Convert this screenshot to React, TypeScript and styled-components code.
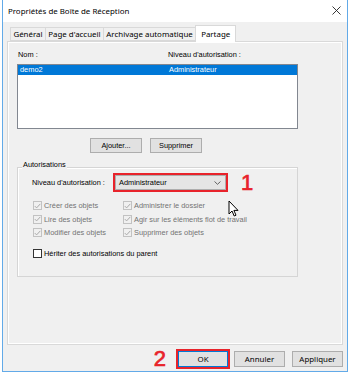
import styled, { createGlobalStyle } from "styled-components";
import { ReactElement } from "react";

const GlobalStyle = createGlobalStyle`
  html, body {
    margin: 0;
    padding: 0;
    background: #ffffff;
    width: 350px;
    height: 374px;
    overflow: hidden;
  }
  * {
    box-sizing: border-box;
  }
`;

const ui = `"Noto Sans", "Liberation Sans", sans-serif`;
const classic = `"Liberation Sans", Arial, sans-serif`;
const red = "#e8232b";

const Window = styled.div`
  position: relative;
  margin-left: 2px;
  width: 346px;
  height: 372px;
  display: flex;
  flex-direction: column;
  border: 1px solid #62aae8;
  border-top: none;
`;

const TitleBar = styled.div`
  height: 22px;
  flex: none;
  display: flex;
  align-items: center;
  justify-content: space-between;
  padding: 0 6px 1px 5px;
  background: #ffffff;
  font-family: ${ui};
  font-size: 7.9px;
  color: #000;
`;

const Body = styled.div`
  flex: 1;
  display: flex;
  flex-direction: column;
  background: #f0f0f0;
  padding: 4px 4px 0 4px;
`;

const TabStrip = styled.div`
  display: flex;
  align-items: flex-end;
  height: 15px;
  padding-left: 4px;
  position: relative;
  z-index: 1;
`;

const Tab = styled.div<{ $active?: boolean }>`
  height: ${(p) => (p.$active ? "17px" : "14px")};
  margin-bottom: ${(p) => (p.$active ? "-1px" : "0")};
  padding: 0 ${(p) => (p.$active ? "5px" : "2.4px")};
  display: flex;
  align-items: center;
  font-family: ${ui};
  font-size: 7.9px;
  color: #000;
  background: ${(p) => (p.$active ? "#ffffff" : "#f0f0f0")};
  border: 1px solid #d9d9d9;
  border-bottom: ${(p) => (p.$active ? "none" : "1px solid #d9d9d9")};
  margin-left: -1px;
`;

const Panel = styled.div`
  height: 304px;
  flex: none;
  border: 1px solid #d9d9d9;
  box-shadow: inset 1px 1px 0 #ffffff, inset -1px -1px 0 #ffffff;
  background: #f0f0f0;
  padding: 8px 0 0 9px;
  font-family: ${classic};
  font-size: 7.4px;
  color: #000;
`;

const HeaderRow = styled.div`
  display: flex;
  height: 10px;
  line-height: 10px;
`;

const Column = styled.div<{ $w?: number }>`
  width: ${(p) => (p.$w ? `${p.$w}px` : "auto")};
  padding-left: 1px;
`;

const ListBox = styled.div`
  margin-top: 4px;
  width: 281px;
  height: 65px;
  background: #ffffff;
  border: 1px solid #828790;
`;

const ListRow = styled.div<{ $selected?: boolean }>`
  display: flex;
  height: 10px;
  line-height: 10px;
  background: ${(p) => (p.$selected ? "#0078d7" : "transparent")};
  color: ${(p) => (p.$selected ? "#ffffff" : "#000")};
  padding-left: 2px;
`;

const ListCell = styled.div<{ $w?: number }>`
  width: ${(p) => (p.$w ? `${p.$w}px` : "auto")};
`;

const ActionRow = styled.div`
  display: flex;
  gap: 8px;
  margin-top: 9px;
  padding-left: 73px;
`;

const Button = styled.button<{ $w?: number; $default?: boolean }>`
  width: ${(p) => p.$w ?? 52}px;
  height: 16px;
  padding: 0;
  margin: 0;
  background: #e1e1e1;
  border: 1px solid ${(p) => (p.$default ? "#0078d7" : "#adadad")};
  font-family: ${ui};
  font-size: 7.9px;
  color: #000;
  display: flex;
  align-items: center;
  justify-content: center;
`;

const SmallButton = styled(Button)`
  height: 15px;
  font-family: ${classic};
  font-size: 7.4px;
`;

const GroupBox = styled.div`
  margin-top: 14px;
  width: 281px;
  height: 110px;
  border: 1px solid #d5d5d5;
  box-shadow: inset 1px 1px 0 #ffffff;
  display: flex;
  flex-direction: column;
`;

const Legend = styled.div`
  margin: -8px 0 0 4px;
  padding: 0 1px;
  width: fit-content;
  height: 10px;
  line-height: 10px;
  background: #f0f0f0;
`;

const LevelRow = styled.div`
  display: flex;
  align-items: center;
  margin-top: 3px;
  padding-left: 14px;
  height: 19px;
`;

const LevelLabel = styled.div`
  width: 81px;
`;

const Highlight = styled.div`
  border: 2px solid ${red};
  display: flex;
`;

const Combo = styled.div`
  width: 111px;
  height: 15px;
  background: #e5e5e5;
  border: 1px solid #adadad;
  display: flex;
  align-items: center;
  justify-content: space-between;
  padding: 0 4px 0 3px;
`;

const Marker = styled.div`
  font-family: ${classic};
  font-weight: 400;
  font-size: 22px;
  line-height: 19px;
  color: ${red};
  -webkit-text-stroke: 0.7px ${red};
`;

const OneMarker = styled(Marker)`
  margin-left: 13px;
`;

const PermGrid = styled.div`
  display: grid;
  grid-template-columns: 90px 160px;
  grid-auto-rows: 13.5px;
  margin-top: 7px;
  padding-left: 15px;
`;

const CheckRow = styled.div<{ $disabled?: boolean }>`
  display: flex;
  align-items: center;
  gap: 2px;
  color: ${(p) => (p.$disabled ? "#737373" : "#000")};
  white-space: nowrap;
`;

const InheritRow = styled(CheckRow)`
  margin-top: 7px;
  padding-left: 15px;
  height: 13px;
`;

const Box = styled.span<{ $disabled?: boolean }>`
  width: 9px;
  height: 9px;
  flex: none;
  border: 1px solid ${(p) => (p.$disabled ? "#c2c2c2" : "#333333")};
  background: ${(p) => (p.$disabled ? "#f0f0f0" : "#ffffff")};
  display: flex;
  align-items: center;
  justify-content: center;
`;

const Footer = styled.div`
  display: flex;
  align-items: center;
  justify-content: flex-end;
  margin-top: 4px;
  height: 19px;
`;

const TwoMarker = styled(Marker)`
  margin-right: 10px;
`;

const OkFrame = styled(Highlight)`
  margin-right: 4px;
`;

const FooterGap = styled.div`
  width: 7px;
`;

const Cursor = styled.svg`
  position: absolute;
  left: 225px;
  top: 200px;
`;

const Check = ({ on }: { on?: boolean }): ReactElement => (
  <Box $disabled={on}>
    {on && (
      <svg width="7" height="6" viewBox="0 0 7 6">
        <path d="M0.8 3.1 L2.6 4.9 L6.3 0.9" fill="none" stroke="#a8a8a8" strokeWidth="1" />
      </svg>
    )}
  </Box>
);

const perms: string[][] = [
  ["Créer des objets", "Administrer le dossier"],
  ["Lire des objets", "Agir sur les éléments flot de travail"],
  ["Modifier des objets", "Supprimer des objets"],
];

const App = (): ReactElement => {
  return (
    <>
      <GlobalStyle />
      <Window>
        <TitleBar>
          <span>Propriétés de Boîte de Réception</span>
          <svg width="9" height="9" viewBox="0 0 9 9">
            <path d="M0.5 0.5 L8.5 8.5 M8.5 0.5 L0.5 8.5" stroke="#222" strokeWidth="0.9" />
          </svg>
        </TitleBar>
        <Body>
          <TabStrip>
            <Tab>Général</Tab>
            <Tab>Page d'accueil</Tab>
            <Tab>Archivage automatique</Tab>
            <Tab $active>Partage</Tab>
          </TabStrip>
          <Panel>
            <HeaderRow>
              <Column $w={150}>Nom :</Column>
              <Column>Niveau d'autorisation :</Column>
            </HeaderRow>
            <ListBox>
              <ListRow $selected>
                <ListCell $w={149}>demo2</ListCell>
                <ListCell>Administrateur</ListCell>
              </ListRow>
            </ListBox>
            <ActionRow>
              <SmallButton>Ajouter...</SmallButton>
              <SmallButton>Supprimer</SmallButton>
            </ActionRow>
            <GroupBox>
              <Legend>Autorisations</Legend>
              <LevelRow>
                <LevelLabel>Niveau d'autorisation :</LevelLabel>
                <Highlight>
                  <Combo>
                    <span>Administrateur</span>
                    <svg width="7" height="4" viewBox="0 0 7 4">
                      <path d="M0.5 0.5 L3.5 3.3 L6.5 0.5" fill="none" stroke="#555" strokeWidth="0.9" />
                    </svg>
                  </Combo>
                </Highlight>
                <OneMarker>1</OneMarker>
              </LevelRow>
              <PermGrid>
                {perms.flat().map((label) => (
                  <CheckRow key={label} $disabled>
                    <Check on />
                    <span>{label}</span>
                  </CheckRow>
                ))}
              </PermGrid>
              <InheritRow>
                <Check />
                <span>Hériter des autorisations du parent</span>
              </InheritRow>
            </GroupBox>
          </Panel>
          <Footer>
            <TwoMarker>2</TwoMarker>
            <OkFrame>
              <Button $w={50} $default>OK</Button>
            </OkFrame>
            <Button $w={51}>Annuler</Button>
            <FooterGap />
            <Button $w={51}>Appliquer</Button>
          </Footer>
        </Body>
        <Cursor width="11" height="17" viewBox="0 0 11 17">
          <path d="M1 1 L1 14 L4 11 L6.2 16 L8 15.2 L5.9 10.4 L10 10.4 Z" fill="#fff" stroke="#000" strokeWidth="1" strokeLinejoin="round" />
        </Cursor>
      </Window>
    </>
  );
};

export default App;
